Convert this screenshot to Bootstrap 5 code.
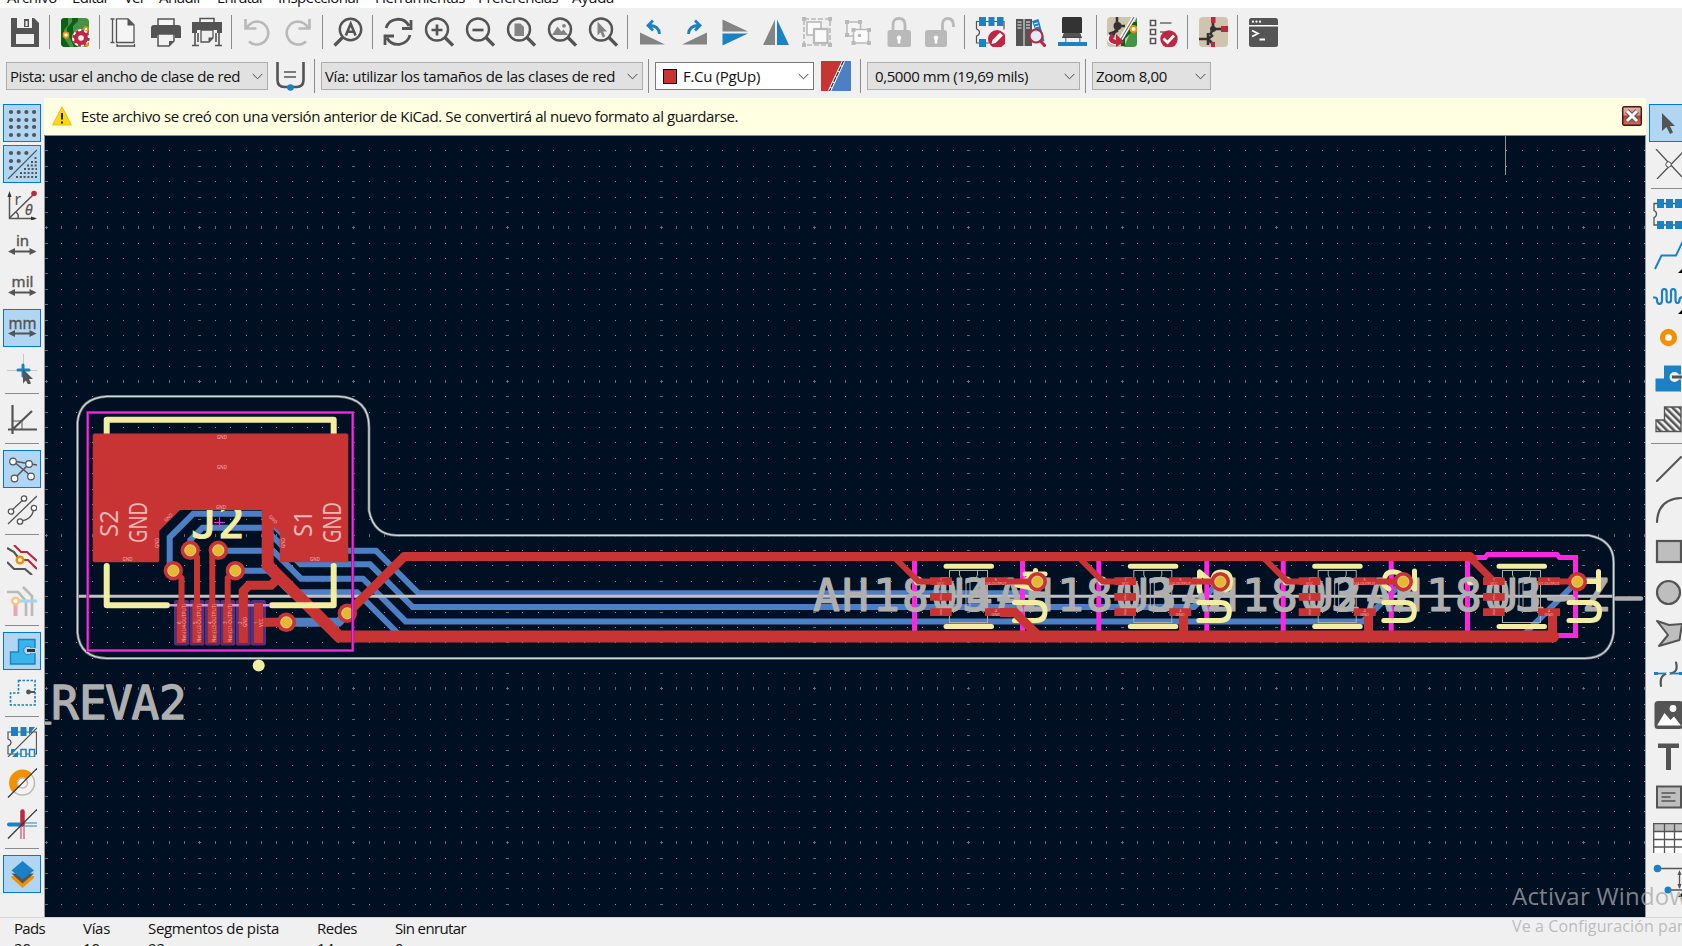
<!DOCTYPE html>
<html lang="es">
<head>
<meta charset="utf-8">
<title>Editor de placas</title>
<link href="https://cdn.jsdelivr.net/npm/bootstrap@5.3.0/dist/css/bootstrap.min.css" rel="stylesheet">
<style>
html,body{height:100%}
body{width:1682px;height:946px;overflow:hidden;background:#f0f0f0;color:#111;font:15px/20px "Open Sans","Noto Sans",sans-serif}
.fit{white-space:pre;display:inline-block}
.menurow{height:8px;background:#fff;overflow:hidden;padding-left:7px}
.menurow .fit{margin-top:-13px;height:21px;flex:none}
.tools{height:48px;padding-left:4px}
.tb{width:41px;height:38px;flex:none;display:flex;align-items:center;justify-content:center}
.tb svg,.sb svg,.ic{width:30px;height:30px;display:block;flex:none}
.vs{width:9px;flex:none;display:flex;justify-content:center}
.vs::before{content:"";width:1px;height:34px;background:#8b8b8b}
.opts{height:40px;margin-bottom:2px}
.vl{width:1px;height:34px;background:#8b8b8b;flex:none}
.combo{height:28px;background:#e1e1e1;border:1px solid #adadad;flex:none;padding:0 4px 0 3px}
.combo svg{width:11px;height:7px;flex:none}
.combo.lit{background:#fff;border-color:#7a7a7a}
.swatch{width:14px;height:15px;background:#c83434;border:1px solid #000;margin:0 6px 0 4px}
.side{flex:none;padding-top:6px}
.side.lft{width:44px;padding-left:3px}
.side.rgt{width:36px;padding-left:3px;overflow:hidden}
.side.rgt .sb svg{margin-left:-1px}
.sb{width:38px;height:38px;border:1px solid transparent;margin-bottom:3px;display:flex;align-items:center;justify-content:center;flex:none}
.sb.on{background:#b1d6f4;border-color:#0078d7}
.hs{height:9px;flex:none;padding:2px 0 0 2px}
.hs::before{content:"";display:block;width:34px;height:1px;background:#8b8b8b}
.info{height:38px;background:#ffffe1;border-bottom:1px solid #8c8c8c;padding:0 4px 2px 8px}
.stage{width:1602px;flex:none}
.stage>svg{display:block}
.stat{height:29px;border-top:1px solid #d7d7d7;overflow:hidden;padding-left:14px}
.stat>div{flex:none;line-height:20px}
.wm{position:absolute;left:1512px;top:880px;width:170px;overflow:hidden;color:rgba(168,168,168,.75);white-space:nowrap}
.wm .h{font-size:24px;line-height:32px}
.wm .s{font-size:16px;line-height:26px;margin-top:1px}
.t{font-family:"Noto Sans","Open Sans",sans-serif}
.stroke{font-family:"DejaVu Sans Mono",monospace}
</style>
</head>
<body class="d-flex flex-column m-0">
<nav class="menurow d-flex flex-none">
<span class="fit" data-w="50" style="margin-right:15px">Archivo</span><span class="fit" data-w="37" style="margin-right:15px">Editar</span><span class="fit" data-w="21" style="margin-right:14px">Ver</span><span class="fit" data-w="43" style="margin-right:15px">Añadir</span><span class="fit" data-w="47" style="margin-right:14px">Enrutar</span><span class="fit" data-w="83" style="margin-right:14px">Inspeccionar</span><span class="fit" data-w="90" style="margin-right:13px">Herramientas</span><span class="fit" data-w="80" style="margin-right:14px">Preferencias</span><span class="fit" data-w="42">Ayuda</span>
</nav>
<div class="tools d-flex align-items-center flex-shrink-0">
<div class="tb"><svg viewBox="0 0 30 30"><path fill="#545454" d="M1 1h23l5 5v24H1z"/><path fill="#f0f0f0" d="M7 1h15v10H7zM6 17h18v10H6z"/><path fill="#545454" d="M14 2h5v8h-5z"/><path fill="#f0f0f0" d="M15.5 4h2v5h-2z"/></svg></div>
<div class="vs"></div>
<div class="tb"><svg viewBox="0 0 30 30"><rect x="1" y="1" width="28" height="29" rx="4" fill="#459344"/><path d="M1 4q0-3 4-3h3v7l-4 5v8l6 9H5q-4 0-4-4zM12 1h6v3l-5 5v5l6 5v11h-5l-4-9-3-3v-7l5-6z" fill="#0c6114"/><circle cx="6" cy="18" r="2.6" fill="#fff" stroke="#f29100" stroke-width="1.6"/><circle cx="26" cy="12" r="2" fill="#fff" stroke="#f29100" stroke-width="1.5"/><g stroke="#fff" fill="#bf2641"><circle cx="21" cy="21" r="8" stroke-width="2"/></g><circle cx="21" cy="21" r="7.2" stroke="#bf2641" stroke-width="3" stroke-dasharray="2.8 2.85" fill="none"/><circle cx="21" cy="21" r="2.8" fill="#fff"/><circle cx="27" cy="28" r="1.7" fill="#f29100"/></svg></div>
<div class="vs"></div>
<div class="tb"><svg viewBox="0 0 30 30"><path fill="none" stroke="#545454" stroke-width="1.3" d="M2.5 1.500v24M0.500 2h4M0.500 25.500h4M6.500 29h18M7 27v4M24.500 27v4"/><path fill="#f5f5f5" stroke="#545454" stroke-width="1.300" d="M6.500 1.800H18l6 6v17.700H6.500z"/><path fill="#545454" d="M17.500 1.500v7H24z"/></svg></div>
<div class="tb"><svg viewBox="0 0 30 30"><path fill="#f5f5f5" stroke="#545454" stroke-width="1.500" d="M7 8V2h16v6"/><path fill="#545454" d="M3 8h24q3 0 3 3v10h-6v-3H6v3H0V11q0-3 3-3z"/><path fill="#f0f0f0" stroke="#545454" stroke-width="1.500" d="M7 17h16v7l-5 5H7z"/><path fill="#545454" d="M18 29v-5h5z"/></svg></div>
<div class="tb"><svg viewBox="0 0 30 30"><path fill="#f5f5f5" stroke="#545454" stroke-width="1.500" d="M8 5V1.500h14V5"/><path fill="#545454" d="M0 5h30v11h-5v-3H5v3H0z"/><path fill="none" stroke="#545454" stroke-width="1.600" d="M3 15v13M0 28.500h7M27 15v13M23 28.500h7M6 16v9M24 16v9"/><path fill="#f0f0f0" stroke="#545454" stroke-width="1.300" d="M9 13h12v8l-4 4H9z"/><path fill="#545454" d="M16.500 25v-4.500H21z"/></svg></div>
<div class="vs"></div>
<div class="tb"><svg viewBox="0 0 30 30"><path fill="none" stroke="#b9b9b9" stroke-width="2.600" d="M3.500 2v9.500h11M4 11.500Q9 4.500 15 4.500A11.500 11.500 0 1 1 7 24.500"/></svg></div>
<div class="tb"><svg viewBox="0 0 30 30"><path fill="none" stroke="#b9b9b9" stroke-width="2.600" d="M26.500 2v9.500h-11M26 11.500Q21 4.500 15 4.500A11.500 11.500 0 1 0 23 24.500"/></svg></div>
<div class="vs"></div>
<div class="tb"><svg viewBox="0 0 30 30"><circle cx="17.500" cy="12.500" r="10.700" fill="none" stroke="#545454" stroke-width="2.400"/><path stroke="#545454" stroke-width="3.200" d="M1.500 28.500l8-8"/><path fill="none" stroke="#545454" stroke-width="2.600" d="M12.800 18.500l4.900-11.700 4.900 11.700M14.500 14.700h6.500"/></svg></div>
<div class="vs"></div>
<div class="tb"><svg viewBox="0 0 30 30"><path fill="none" stroke="#545454" stroke-width="2.800" d="M3 11A12.500 12.500 0 0 1 26 9M28 3v8.500H19M27 18A12.500 12.500 0 0 1 4 21M2 28V19h9"/></svg></div>
<div class="tb"><svg viewBox="0 0 30 30"><circle cx="13" cy="12.500" r="11" fill="#f0f0f0" stroke="#545454" stroke-width="2.400"/><path stroke="#545454" stroke-width="3.300" d="M21 20.500l8 8"/><path stroke="#545454" stroke-width="2.700" d="M7.500 13h11M13 7.500v11"/></svg></div>
<div class="tb"><svg viewBox="0 0 30 30"><circle cx="13" cy="12.500" r="11" fill="#f0f0f0" stroke="#545454" stroke-width="2.400"/><path stroke="#545454" stroke-width="3.300" d="M21 20.500l8 8"/><path stroke="#545454" stroke-width="2.700" d="M7.500 13h11"/></svg></div>
<div class="tb"><svg viewBox="0 0 30 30"><circle cx="13" cy="12.500" r="11" fill="#f0f0f0" stroke="#545454" stroke-width="2.400"/><path stroke="#545454" stroke-width="3.300" d="M21 20.500l8 8"/><path fill="#848484" d="M8.500 6.500h6l3.500 3.500v9H8.500z"/></svg></div>
<div class="tb"><svg viewBox="0 0 30 30"><circle cx="13" cy="12.500" r="11" fill="#f0f0f0" stroke="#545454" stroke-width="2.400"/><path stroke="#545454" stroke-width="3.300" d="M21 20.500l8 8"/><path fill="#848484" d="M5 18l5.500-8.500 4 5 2-2 4.500 5.500z"/><circle cx="17" cy="8.800" r="1.900" fill="#848484"/></svg></div>
<div class="tb"><svg viewBox="0 0 30 30"><circle cx="13" cy="12.500" r="11" fill="#f0f0f0" stroke="#545454" stroke-width="2.400"/><path stroke="#545454" stroke-width="3.300" d="M21 20.500l8 8"/><path fill="#848484" d="M9.500 4.500v14l3-3 2.300 5 2.500-1.200-2.300-4.800h4z"/></svg></div>
<div class="vs"></div>
<div class="tb"><svg viewBox="0 0 30 30"><path fill="#848484" d="M2 15.500v12h25z"/><path fill="none" stroke="#1a81c4" stroke-width="2.800" d="M21.500 17Q21 8.500 11 8.500M15 3.500L10 8.500l5 5"/></svg></div>
<div class="tb"><svg viewBox="0 0 30 30"><path fill="#848484" d="M28 15.500v12H3z"/><path fill="none" stroke="#1a81c4" stroke-width="2.800" d="M9.500 17Q10 8.500 20 8.500M16 3.500l5 5-5 5"/></svg></div>
<div class="tb"><svg viewBox="0 0 30 30"><path fill="#848484" d="M2.500 2.500v12H28z"/><path fill="#1a81c4" d="M2.500 28.500v-12H28z"/></svg></div>
<div class="tb"><svg viewBox="0 0 30 30"><path fill="#848484" d="M14 2.500V28H2z"/><path fill="#1a81c4" d="M16 2.500V28h12z"/></svg></div>
<div class="tb"><svg viewBox="0 0 30 30"><rect x="2" y="2" width="26" height="26" fill="none" stroke="#b9b9b9" stroke-width="1.600" stroke-dasharray="5 2"/><path fill="#b9b9b9" d="M0 0h4v4H0zM26 0h4v4h-4zM0 26h4v4H0zM26 26h4v4h-4z"/><rect x="5" y="5" width="14" height="13" fill="#fafafa" stroke="#b9b9b9" stroke-width="1.600"/><rect x="12" y="12" width="13.500" height="14" fill="#fafafa" stroke="#b9b9b9" stroke-width="2.200"/></svg></div>
<div class="tb"><svg viewBox="0 0 30 30"><rect x="4" y="5" width="13.500" height="14" fill="#f5f5f5" stroke="#b9b9b9" stroke-width="1.500"/><rect x="10.500" y="12.500" width="15" height="13.500" fill="#fafafa" stroke="#b9b9b9" stroke-width="1.500"/><path fill="#b9b9b9" d="M2 3h4v4H2zM15 3h4v4h-4zM2 16h4v4H2zM8.500 24h4v4h-4zM24 24h4v4h-4zM24 11h4v4h-4zM8.500 11h4v4h-4zM15 17h3v3h-3z"/></svg></div>
<div class="tb"><svg viewBox="0 0 30 30"><path fill="none" stroke="#b9b9b9" stroke-width="2.800" d="M9 14V8q0-6.500 6-6.500T21 8v6"/><rect x="3.500" y="13" width="23.500" height="17" rx="2.500" fill="#b9b9b9"/><path fill="#fff" d="M15 18.500a2.300 2.300 0 0 1 1.300 4.200v3.800h-2.600v-3.800A2.300 2.300 0 0 1 15 18.500z"/></svg></div>
<div class="tb"><svg viewBox="0 0 30 30"><path fill="none" stroke="#b9b9b9" stroke-width="2.800" d="M17.500 14V8q0-6.500 5.300-6.500T28.500 8v2"/><rect x="0" y="13" width="22" height="17" rx="2.500" fill="#b9b9b9"/><path fill="#fff" d="M11 18.500a2.300 2.300 0 0 1 1.300 4.200v3.800H9.700v-3.800A2.300 2.300 0 0 1 11 18.500z"/></svg></div>
<div class="vs"></div>
<div class="tb"><svg viewBox="0 0 30 30"><path fill="none" stroke="#545454" stroke-width="1.200" d="M2 4.500h27v8M1.500 4v8q3 1 3 3.500t-3 3.500v7H14"/><path fill="#1a81c4" d="M4 0h7v9H4zM13.500 0h6v9h-6zM22 0h6.500v9H22zM4 22h7v8H4z"/><circle cx="22" cy="22" r="9" fill="#bf2641"/><path fill="#fff" d="M16.500 27l1-4 7.500-7.500 3 3-7.500 7.500z"/></svg></div>
<div class="tb"><svg viewBox="0 0 30 30"><path fill="#545454" d="M0 2h7.500v27H0zM8.500 2H16v27H8.500z"/><path stroke="#f0f0f0" stroke-width="1" d="M1.500 5h4M1.500 8h4M1.500 11h4M10 5h4M10 8h4M10 11h4"/><path fill="#1a81c4" d="M16 4l6.500-2 6 22-5 1z"/><path stroke="#fff" stroke-width="1" d="M18 7l4-1.200M19 10l4-1.200"/><circle cx="20" cy="19" r="6.500" fill="#deeef8" stroke="#bf2641" stroke-width="2.200"/><path stroke="#bf2641" stroke-width="3.200" d="M24.500 24l5 5.500"/></svg></div>
<div class="tb"><svg viewBox="0 0 30 30"><path fill="#8a8a8a" d="M8 18h1.500v7H8zM22 18h1.500v7H22z"/><path fill="#333" d="M6 0h18l1 1v15h-2l2 5H5l2-5H5V1z"/><path fill="#545454" d="M7 16h16l1.500 4.500h-19z"/><path fill="#1a81c4" d="M1 25h29v4H1z"/></svg></div>
<div class="vs"></div>
<div class="tb"><svg viewBox="0 0 30 30"><rect width="30" height="30" rx="4" fill="#cfc4ad"/><path fill="#459344" d="M17 30L30 0v26q0 4-4 4z"/><path fill="none" stroke="#0c6114" stroke-width="4" d="M30 7h-6v6l-8 8v8"/><path stroke="#333" stroke-width="2.600" fill="none" d="M10 0v14l-8 3M10 9h8M9 13l-4 7"/><circle cx="10.500" cy="9" r="4" fill="#333"/><path stroke="#fff" stroke-width="4" d="M27 0L14 22"/><path stroke="#777" stroke-width="1.200" d="M27 0L14 22"/><circle cx="26.500" cy="12" r="3" fill="#fff" stroke="#f29100" stroke-width="2"/><path fill="none" stroke="#fff" stroke-width="6" d="M4 19q-4 6 9 6"/><path fill="none" stroke="#bf2641" stroke-width="4.500" d="M6 18q-6 7 6 7"/><path fill="#bf2641" d="M9 17l8 8-8 5z"/></svg></div>
<div class="tb"><svg viewBox="0 0 30 30"><path fill="#fff" stroke="#545454" stroke-width="1.600" d="M2.500 3.500h5v5h-5zM2.500 12.500h5v5h-5zM2.500 21.500h5v5h-5z"/><path stroke="#8a8a8a" stroke-width="1.800" d="M12 6h11.500M12 15h5"/><circle cx="21" cy="22" r="8.700" fill="#bf2641"/><path fill="none" stroke="#fff" stroke-width="2.800" d="M15.500 21.500l4 4 6.500-7"/></svg></div>
<div class="vs"></div>
<div class="tb"><svg viewBox="0 0 30 30"><rect x="1" width="29" height="30" rx="4" fill="#cfc4ad"/><path fill="none" stroke="#333" stroke-width="2.600" d="M15 3v9l-3 6M15 12h8M1 22h9M15 18l-5 4 5 5M15 27v2M10 16v12"/><circle cx="15" cy="12" r="3" fill="#333"/><path fill="#bf2641" d="M13 0h4.500v6H13zM23 9h7v6h-7zM13 25h4v5h-4z"/></svg></div>
<div class="vs"></div>
<div class="tb"><svg viewBox="0 0 30 30"><rect x="1" y="1" width="29" height="29" rx="2.500" fill="#545454"/><path fill="#fff" d="M1 8h29v1.500H1z"/><g fill="#fff"><circle cx="5" cy="4.700" r="1.100"/><circle cx="8.500" cy="4.700" r="1.100"/><circle cx="12" cy="4.700" r="1.100"/></g><path fill="none" stroke="#fff" stroke-width="1.800" d="M4 13.500l6 3-6 3M11.500 22.500H17"/></svg></div>
</div>
<div class="opts d-flex align-items-center flex-shrink-0">
<div class="combo d-flex align-items-center justify-content-between" style="margin-left:6px;width:262px"><span class="fit" data-w="230">Pista: usar el ancho de clase de red</span><svg viewBox="0 0 11 7"><path d="M.7 1l4.800 4.800L10.300 1" fill="none" stroke="#444"/></svg></div>
<svg class="ic" style="margin-left:7px" viewBox="0 0 30 30"><path fill="none" stroke="#545454" stroke-width="2.600" d="M2.500 1v18q0 7 7 7h12q7 0 7-7V1"/><path stroke="#545454" stroke-width="1.300" d="M9 11h12M9 16h12"/><circle cx="15.500" cy="26.500" r="3.300" fill="#1a81c4"/></svg>
<div class="vl" style="margin-left:9px"></div>
<div class="combo d-flex align-items-center justify-content-between" style="margin-left:6px;width:322px"><span class="fit" data-w="290">Vía: utilizar los tamaños de las clases de red</span><svg viewBox="0 0 11 7"><path d="M.7 1l4.800 4.800L10.300 1" fill="none" stroke="#444"/></svg></div>
<div class="vl" style="margin-left:5px"></div>
<div class="combo lit d-flex align-items-center" style="margin-left:6px;width:159px"><span class="swatch"></span><span class="fit" data-w="77">F.Cu (PgUp)</span><svg class="ms-auto" viewBox="0 0 11 7"><path d="M.7 1l4.800 4.800L10.300 1" fill="none" stroke="#444"/></svg></div>
<svg class="ic" style="margin-left:7px" viewBox="0 0 30 30"><path fill="#c83434" d="M0 0h23L9 30H0z"/><path fill="#4d7fc4" d="M23 0h7v30H9z"/><path stroke="#fff" stroke-width="3.200" d="M22.500 0L8.500 30"/><path stroke="#333" stroke-width="1.300" stroke-dasharray="5 1" d="M22.500 0L8.500 30"/></svg>
<div class="vl" style="margin-left:9px"></div>
<div class="combo d-flex align-items-center justify-content-between" style="margin-left:6px;width:213px;padding-left:7px"><span class="fit" data-w="153">0,5000 mm (19,69 mils)</span><svg viewBox="0 0 11 7"><path d="M.7 1l4.800 4.800L10.300 1" fill="none" stroke="#444"/></svg></div>
<div class="vl" style="margin-left:5px"></div>
<div class="combo d-flex align-items-center justify-content-between" style="margin-left:6px;width:119px"><span class="fit" data-w="71">Zoom 8,00</span><svg viewBox="0 0 11 7"><path d="M.7 1l4.800 4.800L10.300 1" fill="none" stroke="#444"/></svg></div>
</div>
<main class="d-flex flex-shrink-0" style="height:819px">
<div class="side lft d-flex flex-column">
<div class="sb on"><svg viewBox="0 0 30 30"><path fill="none" stroke="#545454" stroke-width="4.200" stroke-linecap="round" stroke-dasharray="0 7.700" d="M4 4h24M4 12h24M4 19h24M4 27h24"/></svg></div>
<div class="sb on"><svg viewBox="0 0 30 30"><path fill="none" stroke="#545454" stroke-width="4.200" stroke-linecap="round" stroke-dasharray="0 7.700" d="M4 4h16M4 12h8M4 19h1"/><path stroke="#545454" stroke-width="1.200" d="M1 30L30 1"/><path fill="none" stroke="#545454" stroke-width="2" stroke-dasharray="2 1.800" d="M9 28h21M13 24h17M17 20h13M20 16.500h10M24 13h6M27.500 9h2"/></svg></div>
<div class="sb"><svg viewBox="0 0 30 30"><path fill="none" stroke="#545454" stroke-width="1.500" d="M2.500 29V4M2 28.500h26M2.500 28L27 4M9 22q3 2.500 2 6"/><path fill="#333" d="M.5 7l2-6 2 6zM24 26.500l6 2-6 2z"/><circle cx="27" cy="3.500" r="2.800" fill="#bf2641"/><text x="7.500" y="15" font-size="16" fill="#545454" class="t">r</text><text x="18" y="25" font-size="14" font-style="italic" fill="#545454" stroke="#545454" stroke-width=".3" class="t">θ</text></svg></div>
<div class="sb"><svg viewBox="0 0 30 30" overflow="visible"><text x="15.500" y="15" font-size="15" text-anchor="middle" fill="#545454" stroke="#545454" stroke-width=".4" class="t">in</text><path stroke="#545454" stroke-width="2" d="M5 20.500h21"/><path fill="#545454" d="M1 20.500l7-3.500v7zM29.500 20.500l-7-3.500v7z"/></svg></div>
<div class="sb"><svg viewBox="0 0 30 30"><text x="15.500" y="15" font-size="15" text-anchor="middle" fill="#545454" stroke="#545454" stroke-width=".4" class="t">mil</text><path stroke="#545454" stroke-width="2" d="M5 20.500h21"/><path fill="#545454" d="M1 20.500l7-3.500v7zM29.500 20.500l-7-3.500v7z"/></svg></div>
<div class="sb on"><svg viewBox="0 0 30 30"><text x="15.500" y="15.500" font-size="17" textLength="28" lengthAdjust="spacingAndGlyphs" text-anchor="middle" fill="#545454" stroke="#545454" stroke-width=".4" class="t">mm</text><path stroke="#545454" stroke-width="2" d="M5 20.500h21"/><path fill="#545454" d="M1 20.500l7-3.500v7zM29.500 20.500l-7-3.500v7z"/></svg></div>
<div class="sb"><svg viewBox="0 0 30 30"><path stroke="#c6c6c6" d="M0 16.500h30M16.500 0v30"/><path stroke="#1a81c4" stroke-width="3" stroke-linecap="round" d="M11 16h11M16 11v11"/><path fill="#545454" d="M16 15v14l3-2.500 2 4 3-1-2-4.500h4z"/></svg></div>
<div class="hs"></div>
<div class="sb"><svg viewBox="0 0 30 30"><path fill="none" stroke="#545454" stroke-width="2.200" d="M5.500 1v29M1 25.500h29M5 26L25 7"/><path fill="none" stroke="#545454" stroke-width="1" d="M5 17h10v8"/></svg></div>
<div class="hs"></div>
<div class="sb on"><svg viewBox="0 0 30 30"><path fill="none" stroke="#545454" stroke-width="1.500" d="M6 7l18 15M8 24L22 10M6 7l24 4"/><g fill="#fff" stroke="#545454" stroke-width="1.200"><circle cx="6" cy="7.500" r="3.300"/><circle cx="22" cy="10" r="3.300"/><circle cx="7.500" cy="24.500" r="3.300"/><circle cx="24" cy="22.500" r="3.300"/></g></svg></div>
<div class="sb"><svg viewBox="0 0 30 30"><path fill="none" stroke="#545454" stroke-width="1.300" d="M1 29L30 1M4 16L17 4M13 26q13-1 14-14"/><g fill="#fff" stroke="#545454" stroke-width="1.300"><circle cx="4" cy="16.500" r="2.700"/><circle cx="17" cy="3.500" r="2.700"/><circle cx="13" cy="26.500" r="2.700"/><circle cx="27" cy="13" r="2.700"/></g></svg></div>
<div class="hs"></div>
<div class="sb"><svg viewBox="0 0 30 30"><path fill="none" stroke="#bf2641" stroke-width="2.200" d="M7 0l7 7h6l10 9M13 15h8l9 9"/><path fill="none" stroke="#545454" stroke-width="2.200" d="M0 3l7 4 6 8M0 17l7 7h11l7 6"/><circle cx="13" cy="15" r="3.300" fill="#fff" stroke="#f29100" stroke-width="2.500"/></svg></div>
<div class="sb"><svg viewBox="0 0 30 30"><path fill="none" stroke="#b9b9b9" stroke-width="2.600" d="M0 6h11l8 9v15M16 1l9 9v20"/><path stroke="#a8d3ef" stroke-width="3" d="M10 15h20"/><path stroke="#eba5b2" stroke-width="4" d="M8.500 17v13"/><circle cx="8.500" cy="15" r="3.300" fill="#fff" stroke="#f9c784" stroke-width="2.500"/></svg></div>
<div class="hs"></div>
<div class="sb on"><svg viewBox="0 0 30 30"><path fill="#39b4ea" stroke="#1a81c4" stroke-width="1.400" d="M11.500 3.500H28V28H3.500V16h8z"/><circle cx="21" cy="14.500" r="4.300" fill="#b1d6f4" stroke="#1a81c4"/><path stroke="#b1d6f4" stroke-width="5" d="M21 14.500h9"/><path stroke="#333" stroke-width="3" d="M20 14.500h8"/></svg></div>
<div class="sb"><svg viewBox="0 0 30 30"><path fill="none" stroke="#1a81c4" stroke-width="1.600" stroke-dasharray="2.500 1.500" d="M11.500 3.500H28V28H3.500V16h8z"/><path stroke="#545454" stroke-width="2" d="M20 15h8"/><circle cx="21.500" cy="15" r="2.400" fill="#545454"/></svg></div>
<div class="hs"></div>
<div class="sb"><svg viewBox="0 0 30 30"><path fill="none" stroke="#545454" stroke-width="1.200" d="M30 5H1v7q3 1 3 3.500T1 19v8h29M1 30L30 1M29.500 5v22"/><path fill="#1a81c4" d="M4 0h7v9H4zM13.500 0h6v9h-6zM22 0h6l-6 8z"/><path fill="#f0f0f0" stroke="#1a81c4" stroke-width="1.500" d="M14 22.500h5V30h-5zM22.500 22.500h5V30h-5z"/><path fill="#1a81c4" d="M4 22h5l-5 6zM5 30l6-6v6z"/></svg></div>
<div class="sb"><svg viewBox="0 0 30 30"><circle cx="15.500" cy="15" r="12" fill="#f5f5f5" stroke="#b9b9b9" stroke-width="1.500"/><circle cx="15.500" cy="15" r="5" fill="none" stroke="#b9b9b9" stroke-width="1.500"/><path fill="#f29100" d="M6 24.500A13 13 0 0 1 25 5.500L19.500 11A5.500 5.500 0 0 0 11.500 19z"/><path stroke="#333" stroke-width="1.200" d="M1 29.500L30 .5"/></svg></div>
<div class="sb"><svg viewBox="0 0 30 30"><path stroke="#1a81c4" stroke-width="4" stroke-linecap="round" d="M2 15.500h13"/><path stroke="#5fa9dc" stroke-width="1.600" d="M15 14h15M15 17h15"/><path stroke="#bf2641" stroke-width="4.500" stroke-linecap="round" d="M15.500 2.500v13"/><path stroke="#d8758a" stroke-width="1.600" d="M14 17v13M17 17v13"/><path stroke="#333" stroke-width="1.200" d="M1 29.500L30 .5"/></svg></div>
<div class="hs"></div>
<div class="sb on"><svg viewBox="0 0 30 30"><path fill="#f29100" d="M4.500 19L15.500 29 27 19v-2H4.500z"/><path fill="#545454" d="M4.500 14.500L15.500 24.500 27 14.500z"/><path fill="#1a81c4" d="M15.500 2L27 11.500 15.500 20.500 4.500 11.500z"/></svg></div>
</div>
<div class="stage d-flex flex-column">
<div class="info d-flex align-items-center flex-shrink-0">
<svg width="20" height="20" viewBox="0 0 20 20"><path fill="#fcd900" stroke="#f5b72f" stroke-width="1" d="M10 .8L19.400 19H.6z"/><path stroke="#222" stroke-width="2" d="M10 7v6.500M10 15.500v2"/></svg>
<span class="fit" style="margin-left:9px" data-w="657">Este archivo se creó con una versión anterior de KiCad. Se convertirá al nuevo formato al guardarse.</span>
<svg class="ms-auto" width="20" height="20" viewBox="0 0 20 20"><defs><linearGradient id="cg" x1="0" y1="0" x2="0" y2="1"><stop offset="0" stop-color="#eeb0a4"/><stop offset=".45" stop-color="#dd8d80"/><stop offset=".5" stop-color="#b93a24"/><stop offset="1" stop-color="#cf7264"/></linearGradient></defs><rect x=".7" y=".7" width="18.600" height="18.600" rx="1.500" fill="url(#cg)" stroke="#43121c" stroke-width="1.400"/><path stroke="#555" stroke-width="5" d="M5 5l10 10M15 5L5 15"/><path stroke="#fff" stroke-width="3" d="M5 5l10 10M15 5L5 15"/></svg>
</div>
<svg width="1602" height="781" viewBox="44 136 1602 781">
<defs>
<g id="via"><circle r="9.700" fill="#c83434"/><circle r="5.600" fill="#e4b82f" stroke="#ecdca6" stroke-width=".8"/></g>
<g id="fab" fill="none" stroke="#afafaf" stroke-width="1"><rect x="949.500" y="570.500" width="38" height="52"/><path d="M959.500 571v4l2 4M977.500 571v4l-2 4M966 581v28M970 581v28"/></g>
<g id="chip">
<path fill="none" stroke="#ff26e2" stroke-width="5" d="M914.500 558V633M1022.500 558V633"/>
<circle cx="918" cy="581" r="4.500" fill="#f2eda1"/>
<path stroke="#f2eda1" stroke-width="5" stroke-linecap="round" d="M946 566.300h45.500M946 626.600h45.500"/>
</g>
<g id="usilk"><path fill="none" stroke="#f2eda1" stroke-width="5" stroke-linecap="round" d="M1014.500 602.500H1036q9 0 9 9t-9 9h-21.500"/></g>
<g id="copper">
<path fill="none" stroke="#c83434" stroke-width="6" d="M932 581.500h-13.500L896 559M1000 581.500h37"/>
<path fill="#c83434" d="M930 577.300h21.700v7.700H930zM930 593h21.700v7.700H930zM930 608.200h21.700v7.700H930zM985 577.300h22v7.700h-22zM985 608.200h22v7.700h-22z"/>
<g class="t" font-size="4" fill="#eeb5b5" text-anchor="middle"><text x="941" y="580.700">1</text><text x="941" y="584.500">VCC</text><text x="941" y="596.500">2</text><text x="941" y="600">X</text><text x="941" y="611.500">3</text><text x="941" y="615.300">X</text><text x="996" y="580.700">5</text><text x="996" y="584.700" textLength="21">U4-OUTPUT</text><text x="996" y="611.500">4</text><text x="996" y="615.500">GND</text></g>
</g>
</defs>
<rect x="44" y="136" width="1602" height="781" fill="#001023"/>
<path id="dots" fill="#8b9196"/><path id="dim" fill="#626a73"/>
<path stroke="#8f979e" d="M1505.500 136v39"/>
<g fill="none" stroke="#4d7fc4" stroke-width="6">
<path d="M173 570.700H169.700V537.300L193.300 513.700H262L299 550.700H376L418.600 593.300H1025L1037 581.500"/>
<path d="M190.300 550V540L202.500 527.700H264L300.600 564.300H370L412.700 607H1194L1220 581.500"/>
<path d="M218 550.700H273L301 578.700H363L405.700 621.400H1363L1403 581.500"/>
<path d="M235 570.700H268L290 592.300H357L401 636.500H1522L1577 581.500"/>
<path stroke-width="9" d="M286 622.300H338.500L347.300 613.300"/>
</g>
<path stroke="#c2c2c2" stroke-width="3" d="M77 596.300H1613"/>
<path fill="none" stroke="#6a737a" stroke-width="2.800" d="M107 396.400H338Q369 398 369 427V510.700Q374 535.300 396.700 535.300H1589Q1613.600 540 1613.600 562V633Q1610 658.300 1585 658.300H107Q80 658 77.500 633V422Q80 398 107 396.400Z"/>
<path fill="none" stroke="#d6d8d3" stroke-width="1.300" d="M107 396.400H338Q369 398 369 427V510.700Q374 535.300 396.700 535.300H1589Q1613.600 540 1613.600 562V633Q1610 658.300 1585 658.300H107Q80 658 77.500 633V422Q80 398 107 396.400Z"/>
<use href="#chip"/><use href="#chip" x="184.300"/><use href="#chip" x="368.700"/>
<path fill="none" stroke="#ff26e2" stroke-width="5" d="M1467.500 633V557.500H1485L1487.500 554.500H1557L1559.500 557.500H1575.500V635.500H1550"/>
<circle cx="1471" cy="581" r="4.500" fill="#f2eda1"/>
<path stroke="#f2eda1" stroke-width="5" stroke-linecap="round" d="M1499 566.300h45.500M1499 626.600h45.500"/>
<g class="stroke" font-size="44.500" fill="#afafaf" stroke="#afafaf" stroke-width="1.200" stroke-linejoin="round">
<text y="611" x="813 842 873 902 931 962 990 1021">AH1803-Z</text>
<text y="611" x="997 1026 1057 1086 1115 1146 1175 1206">AH1803-Z</text>
<text y="611" x="1182 1211 1242 1271 1300 1331 1360 1391">AH1803-Z</text>
<text y="611" x="1366 1395 1426 1455 1484 1515 1546 1582">AH1803-Z</text>
<text y="611" x="938 966">U4</text><text y="611" x="1122 1150">U3</text><text y="611" x="1307 1335">U2</text><text y="611" x="1491 1519">U1</text>
</g>
<path stroke="#afafaf" stroke-width="4.500" stroke-linecap="round" d="M1549 598.500h24M1616 598.500h25"/>
<use href="#fab"/><use href="#fab" x="184.300"/><use href="#fab" x="368.700"/><use href="#fab" x="553"/>
<use href="#usilk"/><use href="#usilk" x="184.300"/><use href="#usilk" x="369.300"/><use href="#usilk" x="554.500"/>
<g fill="none" stroke="#f2eda1" stroke-width="5" stroke-linecap="round" stroke-linejoin="round">
<path d="M1025 574h20M1035.500 570.500v4L1017 585l20 4"/>
<path d="M1199.500 572v19M1199.500 572l14 12q-2-12 8-12 9 0 9 9 0 8-5 9"/>
<path d="M1385 577q2-6 10-5 9 1 19 17M1414.500 571v18M1384 585l5 4"/>
<path d="M1577 581.500h20M1598.500 571.500v18"/>
</g>
<path fill="none" stroke="#c83434" stroke-width="9" stroke-linejoin="round" d="M347.300 613.300L404.300 556.500H1470L1475 561"/>
<path fill="none" stroke="#c83434" stroke-width="7" d="M1469 556.500L1494 581.500"/>
<path fill="none" stroke="#c83434" stroke-width="12" stroke-linecap="round" d="M267.700 500V565.300L339 636.500H1553"/>
<use href="#copper"/><use href="#copper" x="184.300"/><use href="#copper" x="368.700"/>
<g class="t" font-size="4" fill="#eeb5b5" text-anchor="middle"><path stroke="#c83434" stroke-width="6" d="M1553 581.500h24"/><path transform="translate(553)" fill="#c83434" d="M930 577.300h21.700v7.700H930zM930 593h21.700v7.700H930zM930 608.200h21.700v7.700H930zM985 577.300h22v7.700h-22zM985 608.200h22v7.700h-22z"/><text x="1494" y="580.700">1</text><text x="1494" y="584.500">VCC</text><text x="1494" y="596.500">2</text><text x="1494" y="600">X</text><text x="1494" y="611.500">3</text><text x="1494" y="615.300">X</text><text x="1549" y="580.700">5</text><text x="1549" y="584.700" textLength="21">U1-OUTPUT</text><text x="1549" y="611.500">4</text><text x="1549" y="615.500">GND</text></g>
<path fill="none" stroke="#c83434" stroke-width="9" d="M1000 612.500h15L1040 637.500M1183.500 616v20M1368.500 616v20M1552.500 616v20"/>
<use href="#via" x="1037.300" y="581.700"/><use href="#via" x="1220.300" y="581.700"/><use href="#via" x="1403.300" y="581.700"/><use href="#via" x="1577.300" y="581.700"/>
<g fill="none" stroke="#f2eda1" stroke-width="6" stroke-linecap="round" stroke-linejoin="round"><path d="M106.700 440V419.700H333.700V440M106.700 566V605.300H167M333.700 566V605.300H272"/></g>
<g class="stroke" fill="#f2eda1" stroke="#f2eda1" stroke-width="1.200" font-size="44.500"><text x="191" y="538">J</text><text x="218" y="538">2</text></g>
<path fill="#c83434" d="M94 433.500H347l1.300 1.300V561l-1.300 1.300H279.700V532.700L262 515V510H180L159.300 530.700V561L158 562.300H94L92.700 561V435z"/>
<path fill="none" stroke="#c83434" stroke-width="9" d="M276 580.500L271 585.300H249L243.300 591V605"/>
<g fill="#56307b"><rect x="174" y="600" width="15" height="45.500" rx="2"/><rect x="189.500" y="600" width="15" height="45.500" rx="2"/><rect x="205" y="600" width="15" height="45.500" rx="2"/><rect x="220.300" y="600" width="15" height="45.500" rx="2"/><rect x="235.800" y="600" width="15" height="45.500" rx="2"/><rect x="251" y="600" width="15" height="45.500" rx="2"/></g>
<path stroke="#c39ad6" stroke-width="2.500" d="M170 605.300H270"/>
<path fill="none" stroke="#c83434" stroke-width="9" d="M181.500 603v40M197 603v40M212.300 603v40M227.700 603v40M243.300 590v53M258.500 603v40M258 622.300h28"/>
<path fill="none" stroke="#c83434" stroke-width="6" d="M173.300 570.700L181.500 578V605M190.300 550.300L197 557V605M218.300 550.300L212.300 556V605M235.300 570.700L227.700 578V605"/>
<use href="#via" x="173.300" y="570.700"/><use href="#via" x="190.300" y="550.300"/><use href="#via" x="218.300" y="550.300"/><use href="#via" x="235.300" y="570.700"/><use href="#via" x="286.300" y="622.300"/><use href="#via" x="347.300" y="613.300"/>
<g class="t" font-size="4.500" fill="#eeb5b5">
<g transform="rotate(-90)"><text x="-642" y="185.500" textLength="38">Net-(U4-OUTPUT)</text><text x="-642" y="201" textLength="38">Net-(U2-OUTPUT)</text><text x="-642" y="216.300" textLength="38">Net-(U3-OUTPUT)</text><text x="-642" y="231.700" textLength="38">Net-(U1-OUTPUT)</text><text x="-627" y="247">GND</text><text x="-627" y="262.500">VCC</text><text x="-624" y="181">6</text><text x="-624" y="196.500">5</text><text x="-624" y="211.500">4</text><text x="-624" y="227">3</text><text x="-624" y="242">2</text><text x="-624" y="257.500">1</text><text x="-548" y="159">GND</text><text x="-548" y="284.500">GND</text></g>
<text x="217" y="438.500">GND</text><text x="217" y="469">GND</text><text x="216" y="509">GND</text><text x="122.500" y="561.300">GND</text><text x="310" y="561.300">GND</text>
<text transform="translate(166 522) rotate(-45)">GND</text><text transform="translate(268.500 517) rotate(45)">GND</text>
</g>
<g class="t" font-size="25.500" fill="#eeb5b5" transform="rotate(-90)"><text x="-537" y="118" textLength="27" lengthAdjust="spacingAndGlyphs">S2</text><text x="-543" y="147" textLength="41" lengthAdjust="spacingAndGlyphs">GND</text><text x="-537" y="312" textLength="27" lengthAdjust="spacingAndGlyphs">S1</text><text x="-543" y="340.700" textLength="41" lengthAdjust="spacingAndGlyphs">GND</text></g>
<rect x="87.700" y="412.500" width="265" height="238" fill="none" stroke="#8a1f8a" stroke-width="3"/><rect x="87.700" y="412.500" width="265" height="238" fill="none" stroke="#ff26e2" stroke-width="1.500"/>
<path stroke="#ff26e2" d="M214 522.500h11M219.500 517v11"/>
<circle cx="258.700" cy="665.500" r="6" fill="#f2eda1"/>
<text class="stroke" font-size="46" y="718.500" x="23 51 79 105 131.500 159" fill="#afafaf" stroke="#afafaf" stroke-width="1.300" stroke-linejoin="round"><tspan dy="-6">_</tspan><tspan dy="6">R</tspan>EVA2</text>
<path stroke="#9a9a9a" d="M44.500 136V917M1645.500 136V917"/>
</svg>
</div>
<div class="side rgt d-flex flex-column">
<div class="sb on"><svg viewBox="0 0 30 30"><path fill="#545454" d="M9 5v18l4.500-4 3.500 7 3-1.500-3-6.500h5z"/></svg></div>
<div class="sb"><svg viewBox="0 0 30 30"><path stroke="#545454" stroke-width="1.300" d="M3 0l26 28M4 30L30 3"/><circle cx="15.500" cy="15.500" r="2.700" fill="#fff" stroke="#545454"/></svg></div>
<div class="hs"></div>
<div class="sb"><svg viewBox="0 0 30 30"><path fill="none" stroke="#545454" stroke-width="1.300" d="M30 4.500H1v7q2.500 1 2.500 3.500T1 18.500V26h29"/><path fill="#1a81c4" d="M4 0h7v9H4zM13 0h7v9h-7zM22 0h8v9h-8zM4 22h7v8H4zM13 22h7v8h-7zM22 22h8v8h-8z"/></svg></div>
<div class="sb"><svg viewBox="0 0 30 30" overflow="visible"><path fill="none" stroke="#1a81c4" stroke-width="2" d="M2 29l6.500-13.500H23L30 1"/><path d="M25 33h5v-5z" fill="#000"/></svg></div>
<div class="sb"><svg viewBox="0 0 30 30" overflow="visible"><path fill="none" stroke="#1a81c4" stroke-width="2.200" d="M0 16.500h2Q4 16.500 4 19q0 4 2.500 4T9 19v-8q0-3 2.300-3t2.300 3v8q0 2.500 2.200 2.500T18 19v-8q0-3 2.200-3t2.300 3v8q0 3 2 3t2-3q0-3 4-3"/><path d="M25 33h5v-5z" fill="#000"/></svg></div>
<div class="sb"><svg viewBox="0 0 30 30"><circle cx="15.500" cy="15.500" r="6" fill="#fff" stroke="#f29100" stroke-width="5.300"/></svg></div>
<div class="sb"><svg viewBox="0 0 30 30"><path fill="#1a81c4" d="M11 2.500h17v26H2.500v-13H11z"/><circle cx="21.500" cy="14" r="5" fill="#f0f0f0"/><path stroke="#f0f0f0" stroke-width="5" d="M21 14h9"/><path stroke="#545454" stroke-width="3" d="M19 14h11"/></svg></div>
<div class="sb"><svg viewBox="0 0 30 30"><defs><pattern id="ht" width="5" height="5" patternUnits="userSpaceOnUse" patternTransform="rotate(-45)"><rect width="2.500" height="5" fill="#545454"/></pattern></defs><path fill="url(#ht)" stroke="#545454" stroke-width="1.300" d="M11.500 3H28v24.500H3V16h8.500z"/></svg></div>
<div class="hs"></div>
<div class="sb"><svg viewBox="0 0 30 30"><path stroke="#545454" stroke-width="2" stroke-linecap="round" d="M4 27L28 3"/></svg></div>
<div class="sb"><svg viewBox="0 0 30 30"><path fill="none" stroke="#545454" stroke-width="2.200" stroke-linecap="round" d="M4 27Q5 4 28 3"/></svg></div>
<div class="sb"><svg viewBox="0 0 30 30"><rect x="4" y="5" width="24" height="21" fill="#bebebe" stroke="#545454" stroke-width="2.200"/></svg></div>
<div class="sb"><svg viewBox="0 0 30 30"><circle cx="15.500" cy="15.500" r="11.500" fill="#bebebe" stroke="#545454" stroke-width="2.200"/></svg></div>
<div class="sb"><svg viewBox="0 0 30 30"><path fill="#bebebe" stroke="#545454" stroke-width="2" stroke-linejoin="round" d="M4 3l12 4 13-1-2.500 16L6 28l9-11z"/></svg></div>
<div class="sb"><svg viewBox="0 0 30 30"><path fill="none" stroke="#545454" stroke-width="2.200" stroke-linecap="round" d="M8 27q-2-12 8-12.500T23 3.500"/><path stroke="#1a81c4" stroke-width="1.800" d="M2 14.500h28"/><circle cx="15" cy="14.500" r="1.800" fill="#fff"/><path fill="#1a81c4" d="M1 13h4v3H1zM26 13h4v3h-4z"/></svg></div>
<div class="sb"><svg viewBox="0 0 30 30"><rect x="1.500" y="1" width="28.500" height="28" rx="3.500" fill="#545454"/><path fill="#fff" d="M4 25.500L11.500 13l6 7 3.500-3.500 7 9z"/><circle cx="20" cy="8.500" r="3.400" fill="#fff"/></svg></div>
<div class="sb"><svg viewBox="0 0 30 30"><path fill="#545454" d="M5 2.500h21V7h-8v22h-5V7H5z"/></svg></div>
<div class="sb"><svg viewBox="0 0 30 30"><rect x="4" y="4.500" width="24" height="21" fill="#bebebe" stroke="#545454" stroke-width="2"/><path stroke="#545454" stroke-width="1.300" d="M8.500 11h14M8.500 15h9M8.500 19h14"/></svg></div>
<div class="sb"><svg viewBox="0 0 30 30"><path fill="#fff" d="M0 0h30v30H0z"/><path fill="#bebebe" d="M0 0h30v8.500H0z"/><path fill="none" stroke="#545454" stroke-width="1.300" d="M.7 30V.7H30M0 8.500h30M0 16.500h30M0 24h30M11.500 0v30M21.500 0v30"/></svg></div>
<div class="sb"><svg viewBox="0 0 30 30" overflow="visible"><path stroke="#545454" stroke-width="1.300" d="M4 4.500h26M15 26h15M26.500 8v16"/><path fill="#545454" d="M24.500 11l2-5 2 5zM24.500 20l2 5 2-5z"/><circle cx="4.500" cy="4.500" r="3.800" fill="#1a81c4"/><circle cx="15" cy="26" r="3.500" fill="#1a81c4"/><path d="M25 33h5v-5z" fill="#000"/></svg></div>
</div>
</main>
<footer class="stat d-flex flex-shrink-0">
<div style="width:69px"><span class="fit" data-w="31">Pads</span><br>20</div><div style="width:65px"><span class="fit" data-w="27">Vías</span><br>10</div><div style="width:169px"><span class="fit" data-w="131">Segmentos de pista</span><br>92</div><div style="width:78px"><span class="fit" data-w="40">Redes</span><br>14</div><div><span class="fit" data-w="71">Sin enrutar</span><br>0</div>
</footer>
<div class="wm"><div class="h"><span class="fit" data-w="188">Activar Windows</span></div><div class="s"><span class="fit" data-w="313">Ve a Configuración para activar Windows.</span></div></div>
<script src="https://cdn.jsdelivr.net/npm/bootstrap@5.3.0/dist/js/bootstrap.bundle.min.js"></script>
<script>
document.querySelectorAll('.fit').forEach(function(e){
  var w=e.getBoundingClientRect().width;
  e.style.letterSpacing=((+e.dataset.w-w)/e.textContent.length)+'px';
});
// Grid points, with every tenth row and column emphasised
var d='',m='',P=15.373;
for(var i=0;i<105;i++)for(var j=0;j<51;j++){
  var x=Math.round(45.7+i*P),y=Math.round(150.4+j*P);
  if(y>916||x>1645)continue;
  d+='M'+x+' '+y+'h1v1h-1z';
  if(i%10===0)m+='M'+(x-1)+' '+y+'h3v1h-3z';
  if(j%10===5)m+='M'+x+' '+(y-1)+'h1v3h-1z';
}
document.getElementById('dots').setAttribute('d',d);
document.getElementById('dim').setAttribute('d',m);
</script>
</body>
</html>
